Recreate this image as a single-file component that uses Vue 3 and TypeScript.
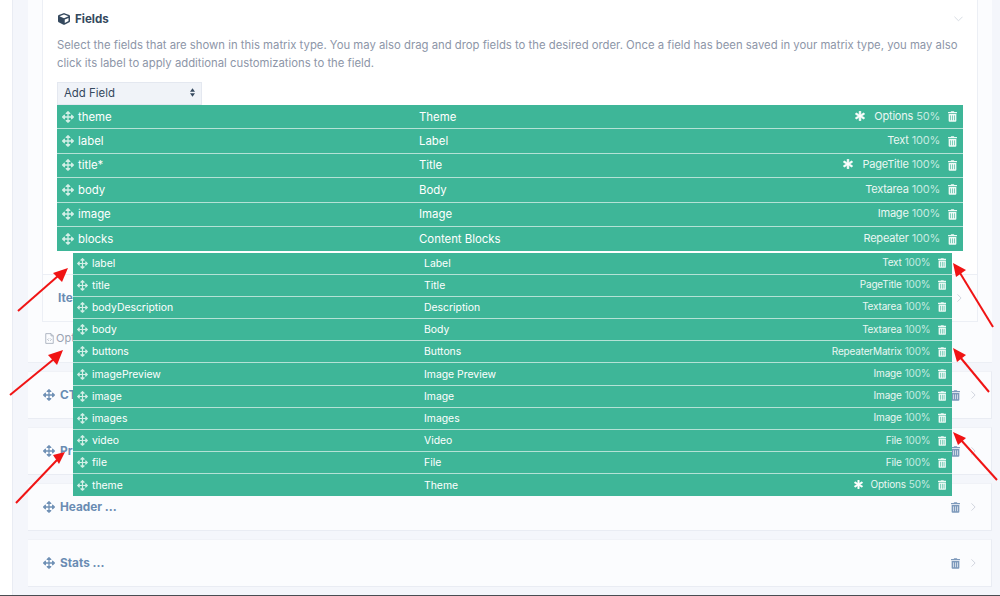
<script setup lang="ts">
interface Row { name: string; label: string; type: string; width: string; star?: boolean }
const mainRows: Row[] = [
  { name: 'theme', label: 'Theme', type: 'Options', width: '50%', star: true },
  { name: 'label', label: 'Label', type: 'Text', width: '100%' },
  { name: 'title*', label: 'Title', type: 'PageTitle', width: '100%', star: true },
  { name: 'body', label: 'Body', type: 'Textarea', width: '100%' },
  { name: 'image', label: 'Image', type: 'Image', width: '100%' },
  { name: 'blocks', label: 'Content Blocks', type: 'Repeater', width: '100%' },
]
const subRows: Row[] = [
  { name: 'label', label: 'Label', type: 'Text', width: '100%' },
  { name: 'title', label: 'Title', type: 'PageTitle', width: '100%' },
  { name: 'bodyDescription', label: 'Description', type: 'Textarea', width: '100%' },
  { name: 'body', label: 'Body', type: 'Textarea', width: '100%' },
  { name: 'buttons', label: 'Buttons', type: 'RepeaterMatrix', width: '100%' },
  { name: 'imagePreview', label: 'Image Preview', type: 'Image', width: '100%' },
  { name: 'image', label: 'Image', type: 'Image', width: '100%' },
  { name: 'images', label: 'Images', type: 'Image', width: '100%' },
  { name: 'video', label: 'Video', type: 'File', width: '100%' },
  { name: 'file', label: 'File', type: 'File', width: '100%' },
  { name: 'theme', label: 'Theme', type: 'Options', width: '50%', star: true },
]
const itemCards: string[] = ['CT ...', 'Pr ...', 'Header ...', 'Stats ...']
const arrows = [
  { x1: 18, y1: 311, x2: 58, y2: 276, head: '68,268 53,273 62,282' },
  { x1: 10, y1: 395, x2: 54, y2: 359, head: '63,350 48,355 57,365' },
  { x1: 16, y1: 503, x2: 57, y2: 460, head: '65,452 53,455 59,464' },
  { x1: 993, y1: 327, x2: 960, y2: 273, head: '953,263 966,270 956,277' },
  { x1: 989, y1: 392, x2: 960, y2: 357, head: '953,348 966,355 957,362' },
  { x1: 997, y1: 480, x2: 961, y2: 440, head: '953,432 966,438 958,445' },
]
const cubePath = 'M239.1 6.3l-208 78c-18.7 7-31.1 25-31.1 45v225.1c0 18.2 10.3 34.8 26.5 42.9l208 104c13.5 6.8 29.4 6.8 42.9 0l208-104c16.3-8.1 26.5-24.8 26.5-42.9V129.3c0-20-12.4-37.9-31.1-44.9l-208-78C262 2.2 250 2.2 239.1 6.3zM256 68.4l192 72v1.1l-192 78-192-78v-1.1l192-72zm32 356V275.5l160-65v133.9l-160 80z'
const movePath = 'M352.201 425.775l-79.196 79.196c-9.373 9.373-24.568 9.373-33.941 0l-79.196-79.196c-15.119-15.119-4.411-40.971 16.971-40.97h51.162L228 284H127.196v51.162c0 21.382-25.851 32.09-40.971 16.971L7.029 272.937c-9.373-9.373-9.373-24.569 0-33.941L86.225 159.8c15.119-15.119 40.971-4.411 40.971 16.971V228H228V127.196h-51.23c-21.382 0-32.09-25.851-16.971-40.971l79.196-79.196c9.373-9.373 24.568-9.373 33.941 0l79.196 79.196c15.119 15.119 4.411 40.971-16.971 40.971h-51.162V228h100.804v-51.162c0-21.382 25.851-32.09 40.97-16.971l79.196 79.196c9.373 9.373 9.373 24.569 0 33.941L425.773 352.2c-15.119 15.119-40.971 4.411-40.97-16.971V284H284v100.804h51.23c21.382 0 32.09 25.851 16.971 40.971z'
const trashPath = 'M32 464a48 48 0 0 0 48 48h288a48 48 0 0 0 48-48V128H32zm272-256a16 16 0 0 1 32 0v224a16 16 0 0 1-32 0zm-96 0a16 16 0 0 1 32 0v224a16 16 0 0 1-32 0zm-96 0a16 16 0 0 1 32 0v224a16 16 0 0 1-32 0zM432 32H312l-9.4-18.7A24 24 0 0 0 281.1 0H166.8a23.72 23.72 0 0 0-21.4 13.3L136 32H16A16 16 0 0 0 0 48v32a16 16 0 0 0 16 16h416a16 16 0 0 0 16-16V48a16 16 0 0 0-16-16z'
const starPath = 'M478.21 334.093L336 256l142.21-78.093c11.795-6.477 15.961-21.384 9.232-33.037l-19.48-33.741c-6.728-11.653-21.72-15.499-33.227-8.523L296 186.718l3.475-162.204C299.763 11.061 288.937 0 275.48 0h-38.96c-13.456 0-24.283 11.061-23.994 24.514L216 186.718 77.265 102.607c-11.506-6.976-26.499-3.13-33.227 8.523l-19.48 33.741c-6.728 11.653-2.562 26.56 9.233 33.037L176 256 33.79 334.093c-11.795 6.477-15.961 21.384-9.232 33.037l19.48 33.741c6.728 11.653 21.721 15.499 33.227 8.523L216 325.282l-3.475 162.204C212.237 500.939 223.063 512 236.52 512h38.961c13.456 0 24.283-11.061 23.994-24.514L296 325.282l138.735 84.111c11.506 6.976 26.499 3.13 33.227-8.523l19.48-33.741c6.727-11.653 2.561-26.56-9.232-33.036z'
</script>

<template>
  <div class="page">
    <div class="outer">
      <div class="shell">
        <div class="fields-card">
          <div class="fields-head">
            <svg class="cube" viewBox="0 0 512 512" aria-hidden="true"><path :d="cubePath" /></svg>
            <span class="fields-title">Fields</span>
            <svg class="chev-down" viewBox="0 0 10 6" aria-hidden="true"><path d="M.5.5 5 5 9.5.5" /></svg>
          </div>
          <p class="desc">Select the fields that are shown in this matrix type. You may also drag and drop fields to the desired order. Once a field has been saved in your matrix type, you may also click its label to apply additional customizations to the field.</p>
          <div class="select">
            <span>Add Field</span>
            <svg class="updown" viewBox="0 0 6 10" aria-hidden="true"><path d="M3 0 6 4H0ZM3 10 0 6H6Z" /></svg>
          </div>
          <div class="list main">
            <div v-for="r in mainRows" :key="r.name" class="row">
              <svg class="move" viewBox="0 0 512 512" aria-hidden="true"><path :d="movePath" /></svg>
              <span class="name">{{ r.name }}</span>
              <span class="label">{{ r.label }}</span>
              <span class="meta">
                <svg v-if="r.star" class="star" viewBox="0 0 512 512" aria-hidden="true"><path :d="starPath" /></svg>
                <span class="type">{{ r.type }}</span>
                <span class="pct">{{ r.width }}</span>
              </span>
              <svg class="trash" viewBox="0 0 448 512" aria-hidden="true"><path :d="trashPath" /></svg>
            </div>
          </div>
        </div>
        <div class="item-card inner">
          <span class="item-title">Items ...</span>
          <svg class="chev" viewBox="0 0 6 10" aria-hidden="true"><path d="M.5.5 5 5 .5 9.5" /></svg>
        </div>
        <div class="opts">
          <svg class="file" viewBox="0 0 12 14" aria-hidden="true"><path d="M1 .5H8L11 3.5V13.5H1ZM8 .5V3.5H11M5 7 3.5 8.5 5 10M7 7 8.5 8.5 7 10" /></svg>
          <span>Options</span>
        </div>
      </div>
      <div v-for="c in itemCards" :key="c" class="item-card">
        <svg class="move dark" viewBox="0 0 512 512" aria-hidden="true"><path :d="movePath" /></svg>
        <span class="item-title">{{ c }}</span>
        <svg class="trash dark" viewBox="0 0 448 512" aria-hidden="true"><path :d="trashPath" /></svg>
        <svg class="chev" viewBox="0 0 6 10" aria-hidden="true"><path d="M.5.5 5 5 .5 9.5" /></svg>
      </div>
    </div>
    <div class="list sub">
      <div v-for="r in subRows" :key="r.name + r.label" class="row">
        <svg class="move" viewBox="0 0 512 512" aria-hidden="true"><path :d="movePath" /></svg>
        <span class="name">{{ r.name }}</span>
        <span class="label">{{ r.label }}</span>
        <span class="meta">
          <svg v-if="r.star" class="star" viewBox="0 0 512 512" aria-hidden="true"><path :d="starPath" /></svg>
          <span class="type">{{ r.type }}</span>
          <span class="pct">{{ r.width }}</span>
        </span>
        <svg class="trash" viewBox="0 0 448 512" aria-hidden="true"><path :d="trashPath" /></svg>
      </div>
    </div>
    <svg class="arrows" viewBox="0 0 1000 596" aria-hidden="true">
      <g v-for="(a, i) in arrows" :key="i">
        <line :x1="a.x1" :y1="a.y1" :x2="a.x2" :y2="a.y2" />
        <polygon :points="a.head" />
      </g>
    </svg>
    <div class="bottom-line"></div>
  </div>
</template>

<style>
html, body { margin: 0; background: #fff; }
</style>

<style scoped>
.page {
  position: relative;
  width: 1000px;
  height: 596px;
  overflow: hidden;
  background: #fff;
  font-family: Inter, "Liberation Sans", sans-serif;
  color: #35495e;
}
.outer {
  margin-left: 12px;
  height: 596px;
  box-sizing: border-box;
  padding: 0 8px 0 15px;
  background: #f4f6fb;
  border-left: 1px solid #e9ecf3;
  display: flex;
  flex-direction: column;
  gap: 8px;
}
.shell {
  height: 363px;
  box-sizing: border-box;
  flex: none;
  padding: 0 14px;
  background: #fbfcfe;
  border-bottom: 1px solid #eceff5;
}
.fields-card {
  height: 274px;
  box-sizing: border-box;
  padding: 0 14px;
  background: #fff;
  border-left: 1px solid #eceff5;
  border-right: 1px solid #eceff5;
}
.fields-head {
  height: 36px;
  box-sizing: border-box;
  padding-top: 1px;
  display: flex;
  align-items: center;
}
.cube { width: 12px; height: 12px; fill: #35495e; margin: 0 5px 0 1px; }
.fields-title { font-size: 11.6px; font-weight: 700; color: #35495e; }
.chev-down { width: 9px; height: 6px; margin-left: auto; fill: none; stroke: #d3d8e0; stroke-width: 1; }
.desc {
  margin: 0;
  font-size: 11.32px;
  line-height: 18px;
  color: #8d96a8;
  width: 906px;
}
.select {
  margin-top: 10px;
  width: 145px;
  height: 23px;
  box-sizing: border-box;
  padding: 0 6px 2px;
  display: flex;
  align-items: center;
  justify-content: space-between;
  background: #f0f3f8;
  border: 1px solid #e4e8f0;
  font-size: 11.4px;
  color: #35495e;
}
.updown { width: 5px; height: 9px; fill: #35495e; }
.list { background: #3eb698; color: #fff; }
.main { width: 906px; }
.main .row {
  height: 24.4px;
  font-size: 11.4px;
  box-sizing: border-box;
  border-bottom: 1px solid #b4e2d6;
  padding: 0 6px 0 5px;
}
.main .row:last-child { border-bottom: 0; }
.row { display: flex; align-items: center; }
.move { width: 12px; height: 12px; fill: #d3efe7; flex: none; }
.main .name { width: 341px; margin-left: 4px; flex: none; }
.meta { margin-left: auto; display: flex; align-items: center; padding-bottom: 2px; }
.main .meta { font-size: 11px; letter-spacing: -.2px; }
.sub .meta { font-size: 10px; letter-spacing: -.18px; }
.star { width: 10px; height: 10px; fill: #fff; stroke: #fff; stroke-width: 30; margin-right: 9px; flex: none; }
.type { color: #eaf7f3; margin-right: 3px; }
.pct { color: #c6ebe1; }
.trash { width: 9px; height: 11px; fill: #eefaf6; flex: none; margin-left: 8px; }
.sub {
  position: absolute;
  left: 73px;
  top: 252.5px;
  width: 879px;
}
.sub .row {
  height: 22.2px;
  font-size: 10.4px;
  box-sizing: border-box;
  border-bottom: 1px solid #b4e2d6;
  padding: 0 6px 0 4px;
}
.sub .row:last-child { border-bottom: 0; height: 21.6px; }
.sub .move { width: 11px; height: 11px; }
.sub .name { width: 332px; margin-left: 4px; flex: none; }
.sub .star { width: 9px; height: 9px; margin-right: 7px; }
.sub .trash { width: 8.5px; height: 10px; margin-left: 7px; }
.item-card {
  height: 48px;
  flex: none;
  box-sizing: border-box;
  padding: 0 15px;
  background: #fbfcfe;
  border-bottom: 1px solid #e9ecf3;
  border-right: 1px solid #e9ecf3;
  border-top: 1px solid #f0f2f7;
  display: flex;
  align-items: center;
}
.item-card.inner {
  background: #fcfdfe;
  border: 1px solid #eceff5;
}
.move.dark { fill: #6f90b5; margin-right: 5px; }
.item-title { font-size: 11.8px; font-weight: 700; color: #6a8cb3; }
.trash.dark { fill: #7d99bb; margin-left: auto; width: 9px; height: 11px; }
.chev { width: 5px; height: 8px; fill: none; stroke: #c6ccd6; stroke-width: 1; margin-left: 11px; }
.inner .chev { margin-left: auto; }
.opts {
  margin-top: 9px;
  padding-left: 3px;
  display: flex;
  align-items: center;
  gap: 2px;
  font-size: 11px;
  color: #9aa3b2;
}
.file { width: 9px; height: 11px; fill: none; stroke: #9aa3b2; stroke-width: 1; }
.arrows { position: absolute; left: 0; top: 0; width: 1000px; height: 596px; pointer-events: none; }
.arrows line { stroke: #f01414; stroke-width: 2; }
.arrows polygon { fill: #f01414; }
.bottom-line { position: absolute; left: 0; right: 0; bottom: 0; height: 1px; background: #4a4d52; }
</style>
